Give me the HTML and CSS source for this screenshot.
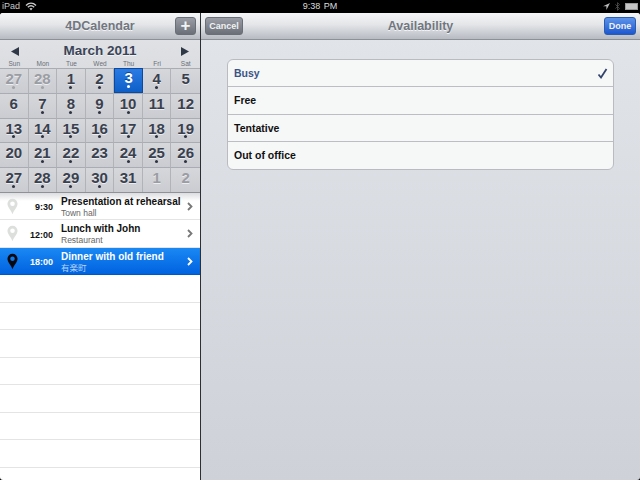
FILE: index.html
```html
<!DOCTYPE html>
<html lang="en">
<head>
    <meta charset="UTF-8">
    <title>4DCalendar</title>
    <link rel="stylesheet" href="styles.css">
</head>
<body>
    <div class="status-bar">
        <div class="status-left">
            <span>iPad</span>
            <svg class="wifi" width="12" height="9" viewBox="0 0 12 9">
                <path d="M1 3.4C4 .6 8 .6 11 3.4M2.8 5.2c2-1.8 4.4-1.8 6.4 0" fill="none" stroke="#ccc" stroke-width="1.4"/>
                <path d="M4.4 6.6c1-.8 2.2-.8 3.2 0L6 8.4z" fill="#ccc"/>
            </svg>
        </div>
        <div class="status-time">9:38 PM</div>
        <div class="status-right">
            <svg width="7" height="7" viewBox="0 0 7 7"><path d="M7 0L0 3.2h3.4V7z" fill="#bbb"/></svg>
            <svg width="5" height="9" viewBox="0 0 5 9"><path d="M.4 2.4l4 4L2.5 8.4V.6l2 2-4 4" fill="none" stroke="#555" stroke-width=".8"/></svg>
            <div class="battery"></div>
        </div>
    </div>

    <div class="app">
        <div class="master">
            <div class="navbar">
                <div></div>
                <div class="nav-title">4DCalendar</div>
                <div class="btn btn-add">+</div>
            </div>

            <div class="calendar">
                <div class="month-row">
                    <svg width="8" height="9" viewBox="0 0 8 9"><path d="M8 0v9L0 4.5z" fill="#2f3846"/></svg>
                    <span class="month-name">March 2011</span>
                    <svg width="8" height="9" viewBox="0 0 8 9"><path d="M0 0v9l8-4.500z" fill="#2f3846"/></svg>
                </div>
                <div class="weekdays">
                    <span>Sun</span><span>Mon</span><span>Tue</span><span>Wed</span><span>Thu</span><span>Fri</span><span>Sat</span>
                </div>
                <div class="days">
                    <div class="day muted dot">27</div>
                    <div class="day muted dot">28</div>
                    <div class="day dot">1</div>
                    <div class="day dot">2</div>
                    <div class="day today dot">3</div>
                    <div class="day dot">4</div>
                    <div class="day">5</div>

                    <div class="day">6</div>
                    <div class="day dot">7</div>
                    <div class="day dot">8</div>
                    <div class="day dot">9</div>
                    <div class="day dot">10</div>
                    <div class="day">11</div>
                    <div class="day">12</div>

                    <div class="day dot">13</div>
                    <div class="day dot">14</div>
                    <div class="day dot">15</div>
                    <div class="day dot">16</div>
                    <div class="day dot">17</div>
                    <div class="day dot">18</div>
                    <div class="day dot">19</div>

                    <div class="day">20</div>
                    <div class="day dot">21</div>
                    <div class="day dot">22</div>
                    <div class="day">23</div>
                    <div class="day dot">24</div>
                    <div class="day dot">25</div>
                    <div class="day dot">26</div>

                    <div class="day dot">27</div>
                    <div class="day dot">28</div>
                    <div class="day dot">29</div>
                    <div class="day dot">30</div>
                    <div class="day">31</div>
                    <div class="day muted">1</div>
                    <div class="day muted">2</div>
                </div>
            </div>

            <div class="events">
                <div class="event">
                    <svg class="pin" width="11" height="17" viewBox="0 0 12 18"><path d="M6 .5a5.5 5.5 0 0 1 5.5 5.5C11.500 9.500 7.500 13 6 17.500 4.500 13 .5 9.500 .5 6A5.500 5.500 0 0 1 6 .5zM6 3.500a2.500 2.500 0 1 0 0 5 2.500 2.500 0 0 0 0-5z" fill="#dcdfdc" fill-rule="evenodd"/></svg>
                    <div class="event-time">9:30</div>
                    <div class="event-text">
                        <div class="event-title">Presentation at rehearsal</div>
                        <div class="event-place">Town hall</div>
                    </div>
                    <svg class="chevron" width="6" height="9" viewBox="0 0 6 9"><path d="M1 1l3.500 3.500L1 8" fill="none" stroke="#777" stroke-width="1.800"/></svg>
                </div>
                <div class="event">
                    <svg class="pin" width="11" height="17" viewBox="0 0 12 18"><path d="M6 .5a5.5 5.5 0 0 1 5.5 5.5C11.500 9.500 7.500 13 6 17.500 4.500 13 .5 9.500 .5 6A5.500 5.500 0 0 1 6 .5zM6 3.500a2.500 2.500 0 1 0 0 5 2.500 2.500 0 0 0 0-5z" fill="#dcdfdc" fill-rule="evenodd"/></svg>
                    <div class="event-time">12:00</div>
                    <div class="event-text">
                        <div class="event-title">Lunch with John</div>
                        <div class="event-place">Restaurant</div>
                    </div>
                    <svg class="chevron" width="6" height="9" viewBox="0 0 6 9"><path d="M1 1l3.500 3.500L1 8" fill="none" stroke="#777" stroke-width="1.800"/></svg>
                </div>
                <div class="event selected">
                    <svg class="pin" width="11" height="17" viewBox="0 0 12 18"><path d="M6 .5a5.5 5.5 0 0 1 5.5 5.5C11.500 9.500 7.500 13 6 17.500 4.500 13 .5 9.500 .5 6A5.500 5.500 0 0 1 6 .5zM6 3.500a2.500 2.500 0 1 0 0 5 2.500 2.500 0 0 0 0-5z" fill="#05080f" fill-rule="evenodd"/></svg>
                    <div class="event-time">18:00</div>
                    <div class="event-text">
                        <div class="event-title">Dinner with old friend</div>
                        <div class="event-place">有楽町</div>
                    </div>
                    <svg class="chevron" width="6" height="9" viewBox="0 0 6 9"><path d="M1 1l3.500 3.500L1 8" fill="none" stroke="#fff" stroke-width="1.800"/></svg>
                </div>
                <div class="event empty"></div>
                <div class="event empty"></div>
                <div class="event empty"></div>
                <div class="event empty"></div>
                <div class="event empty"></div>
                <div class="event empty"></div>
                <div class="event empty"></div>
            </div>
        </div>

        <div class="detail">
            <div class="navbar">
                <div class="btn btn-cancel">Cancel</div>
                <div class="nav-title">Availability</div>
                <div class="btn btn-done">Done</div>
            </div>
            <div class="options">
                <div class="option checked">
                    <span>Busy</span>
                    <svg width="11" height="11" viewBox="0 0 11 11"><path d="M1.500 6.500L4 9.500 9.500 1" fill="none" stroke="#33446c" stroke-width="1.800"/></svg>
                </div>
                <div class="option"><span>Free</span></div>
                <div class="option"><span>Tentative</span></div>
                <div class="option"><span>Out of office</span></div>
            </div>
        </div>
    </div>
</body>
</html>
```

FILE: styles.css
```css
* {
    box-sizing: border-box;
}

html, body {
    height: 100%;
}

body {
    margin: 0;
    width: 640px;
    height: 480px;
    overflow: hidden;
    display: flex;
    flex-direction: column;
    background: #000;
    font-family: "Liberation Sans", Arial, sans-serif;
}

/* status bar */
.status-bar {
    height: 13px;
    flex: none;
    display: grid;
    grid-template-columns: 1fr auto 1fr;
    align-items: center;
    padding: 0 2px;
    background: #000;
    color: #c8c8c8;
    font-size: 9px;
    line-height: 13px;
}

.status-left {
    display: flex;
    align-items: center;
    gap: 5px;
}

.status-time {
    color: #dcdcdc;
    word-spacing: 1px;
}

.status-right {
    display: flex;
    justify-content: flex-end;
    align-items: center;
    gap: 5px;
}

.battery {
    width: 13px;
    height: 7px;
    border: 1px solid #999;
    background: #c4c4c4;
}

/* split view */
.app {
    flex: 1;
    display: flex;
    min-height: 0;
    border-radius: 3px;
    overflow: hidden;
}

.master {
    width: 200px;
    flex: none;
    display: flex;
    flex-direction: column;
    background: #fff;
}

.detail {
    flex: 1;
    border-left: 1px solid #2c2f33;
    display: flex;
    flex-direction: column;
    background: linear-gradient(#e2e5ea, #ced1d7);
}

.navbar {
    height: 27px;
    flex: none;
    display: grid;
    grid-template-columns: 1fr auto 1fr;
    align-items: center;
    padding: 0 4px;
    background: linear-gradient(#f5f6f7, #e3e5e8 45%, #b7bbc2);
    border-bottom: 1px solid #8d9097;
}

.nav-title {
    color: #71767f;
    font-size: 12.500px;
    font-weight: bold;
    text-shadow: 0 1px 0 #f2f3f5;
}

.btn {
    height: 18px;
    display: flex;
    align-items: center;
    justify-content: center;
    border-radius: 3px;
    border: 1px solid #6a6e76;
    background: linear-gradient(#9a9da5, #6b6f78);
    color: #f1f2f3;
    font-size: 9px;
    font-weight: bold;
}

.btn-add {
    width: 21px;
    justify-self: end;
    font-size: 17px;
    line-height: 16px;
}

.btn-cancel {
    width: 38px;
}

.btn-done {
    width: 32px;
    justify-self: end;
    border-color: #2a5cb0;
    background: linear-gradient(#5d93e8, #1c57cf);
}

/* calendar */
.calendar {
    flex: none;
    background: linear-gradient(#dfe1e5, #c9cbd0);
}

.month-row {
    height: 19px;
    display: flex;
    align-items: center;
    justify-content: space-between;
    padding: 3px 11px 0;
    color: #3a4457;
}

.month-name {
    font-size: 13.500px;
    font-weight: bold;
    line-height: 16px;
    text-shadow: 0 1px 0 #f2f3f5;
}

.weekdays {
    height: 9px;
    display: grid;
    grid-template-columns: repeat(7, 1fr);
    color: #6a6f77;
    font-size: 6.500px;
    line-height: 9px;
    text-align: center;
}

.days {
    display: grid;
    grid-template-columns: repeat(7, 1fr);
    grid-auto-rows: 24.800px;
    border-bottom: 1px solid #8f9196;
}

.day {
    position: relative;
    display: flex;
    justify-content: center;
    padding-top: 1px;
    border-top: 1px solid #a9acb2;
    border-right: 1px solid #b1b3b9;
    background: linear-gradient(#d6d7db, #cbccd1);
    color: #39404e;
    font-size: 15px;
    font-weight: bold;
    line-height: 18px;
    text-shadow: 0 1px 0 #ecedef;
}

.day:nth-child(7n) {
    border-right: none;
}

.day.dot::after {
    content: "";
    position: absolute;
    left: 50%;
    bottom: 4px;
    width: 3px;
    height: 3px;
    margin-left: -1.500px;
    border-radius: 50%;
    background: #2d3340;
}

.day.muted {
    color: #9a9da3;
}

.day.muted.dot::after {
    background: #a0a3a8;
}

.day.today {
    background: linear-gradient(#2a7be4, #0f5fc9);
    border: 1px solid #0d4a9c;
    color: #fff;
    text-shadow: 0 -1px 0 #0c4590;
    padding-top: 0;
}

.day.today::after {
    background: #fff;
}

/* event list */
.events {
    flex: 1;
    overflow: hidden;
}

.event {
    height: 27.500px;
    display: flex;
    align-items: center;
    border-bottom: 1px solid #e4e4e4;
    background: #fff;
}

.event:first-child {
    background: linear-gradient(#dcdde0, #fff 8px);
}

.pin {
    flex: none;
    margin-left: 7px;
}

.event-time {
    width: 35px;
    flex: none;
    margin-top: 2px;
    color: #111;
    font-size: 9px;
    font-weight: bold;
    text-align: right;
}

.event-text {
    flex: 1;
    min-width: 0;
    padding-left: 8px;
    padding-top: 2px;
}

.event-title {
    color: #111;
    font-size: 10px;
    font-weight: bold;
    line-height: 12px;
    white-space: nowrap;
}

.event-place {
    color: #666;
    font-size: 8.500px;
    line-height: 11px;
    font-family: "Liberation Sans", "Noto Sans CJK JP", sans-serif;
}

.chevron {
    flex: none;
    margin-right: 7px;
}

.event.selected {
    background: linear-gradient(#1a88f4, #0062e0);
    border-bottom-color: #0058c8;
}

.event.selected .event-time,
.event.selected .event-title {
    color: #fff;
}

.event.selected .event-place {
    color: #b9d5f7;
}

/* availability options */
.options {
    margin: 19px 26px 0;
    border: 1px solid #b9bbc0;
    border-radius: 6px;
    background: #f6f7f7;
    overflow: hidden;
}

.option {
    height: 27.250px;
    display: flex;
    align-items: center;
    justify-content: space-between;
    padding: 0 5px 0 6px;
    border-bottom: 1px solid #bcbec3;
    color: #111;
    font-size: 10.500px;
    font-weight: bold;
}

.option:last-child {
    border-bottom: none;
}

.option.checked {
    color: #3a5487;
}
```
